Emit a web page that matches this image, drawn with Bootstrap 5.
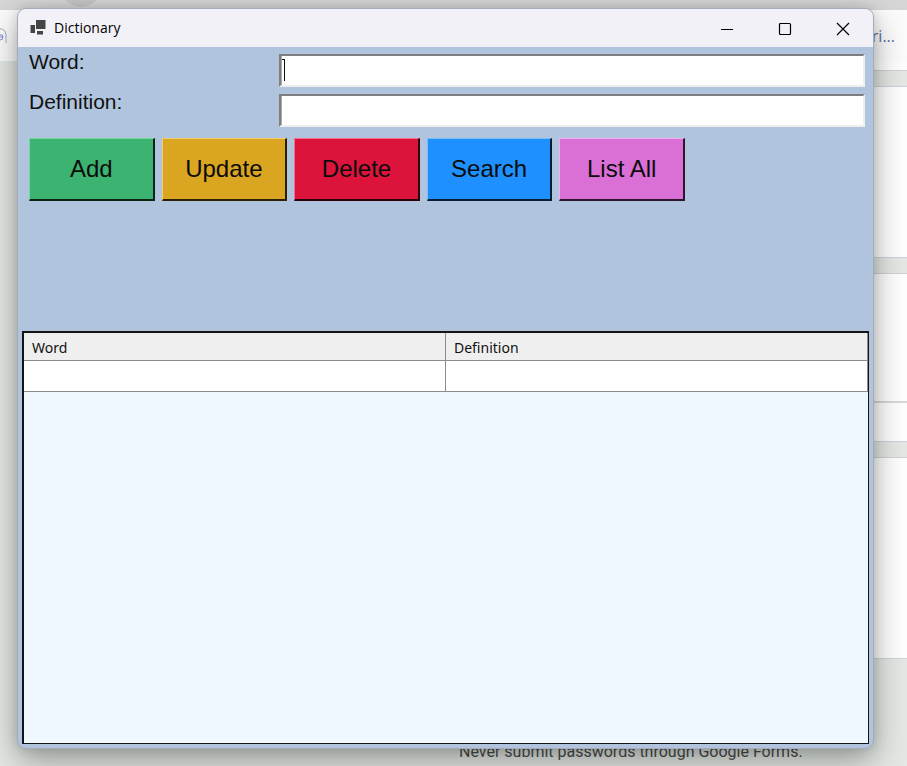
<!DOCTYPE html>
<html lang="en">
<head>
<meta charset="utf-8">
<meta name="viewport" content="width=device-width, initial-scale=1">
<title>Dictionary</title>
<link href="https://cdn.jsdelivr.net/npm/bootstrap@5.3.0/dist/css/bootstrap.min.css" rel="stylesheet">
<style>
  body { background: #e3e8e4; font-family: "Liberation Sans", Arial, sans-serif; color: #111; }

  /* Browser page behind the window */
  .tab-strip { height: 10px; background: #d6d6d6; padding-left: 60px; }
  .tab-ring { width: 42px; height: 42px; margin-top: -35px; border: 7px solid #c6c6c6; border-radius: 50%; background: #ececec; }
  .bookmarks { height: 51px; background: #fbfbfb; font: 16px/20px "Open Sans", sans-serif; color: #5f6d9c; padding: 0 12px 0 0; }
  .bookmark-icon { width: 7px; height: 18px; }
  .sheets { margin-left: 140px; gap: 15px; }
  .sheet { background: #fefefe; border: solid #cfd3d8; border-width: 1px 0; }
  .sheet-head { height: 10px; border-top: 0; }
  .sheet-a { height: 172px; }
  .sheet-b { height: 169px; }
  .sheet-b-top { height: 129px; border-bottom: 2px solid #d8d8d8; }
  .sheet-c { height: 202px; }
  .form-note { font: 16px/20px Roboto, sans-serif; color: #4a4d4b; padding: 83px 0 0 459px; }

  /* Application window */
  .app-window { inset: 8px 33px 17px 17px; background: #b0c4de; border: 1px solid #a3abb8; border-radius: 9px; box-shadow: 0 12px 32px rgba(0, 0, 0, .34), 0 0 12px rgba(0, 0, 0, .12); }
  .title-bar { height: 38px; background: #f3f1f8; padding: 0 1px 0 12px; font: 14px/20px "Open Sans", sans-serif; color: #000; }
  .title-text { margin: 0 0 0 8px; font: inherit; }
  .caption-btn { width: 58px; height: 36px; background: none; border: 0; padding: 0; }
  .fields { display: grid; grid-template-columns: 250px 1fr; row-gap: 7px; padding: 7px 8px 0 11px; }
  .fields label { font-size: 21px; line-height: 16px; }
  .sunken { height: 33px; min-width: 0; width: 100%; font-size: 20px; padding: 0 2px; background: #fff; border: solid; border-width: 2px; border-color: #7e7e7e #eee #eee #7e7e7e; border-radius: 0; box-shadow: inset 1px 0 #aaa; outline: 0; }
  .caret { left: 3px; top: 4px; width: 6px; height: 24px; }
  .actions { gap: 7px; max-width: 674px; padding: 11px 7px 0 11px; }
  .act { height: 63px; flex: 1 1 0; font-size: 24px; line-height: 28px; padding: 0; color: #0b0b0b; border: solid; border-width: 1px 2px 2px 1px; }
  .act-add { background: #3cb371; border-color: #75d79e #0a2416 #0a2416 #75d79e; }
  .act-update { background: #daa520; border-color: #f0cd71 #2b2006 #2b2006 #f0cd71; }
  .act-delete { background: #dc143c; border-color: #f26d87 #2c040c #2c040c #f26d87; }
  .act-search { background: #1e90ff; border-color: #78bdff #061d33 #061d33 #78bdff; }
  .act-list { background: #da70d6; border-color: #efaeec #2b162a #2b162a #efaeec; }
  .grid-panel { margin: 130px 4px 4px; background: #f0f8ff; border: solid #151515; border-width: 2px 1px 1px 2px; }
  .word-grid { width: 100%; table-layout: fixed; border-collapse: separate; border-spacing: 0; font: 14px/20px "Noto Sans", sans-serif; }
  .word-grid th { height: 28px; background: #efefef; font-weight: 400; padding: 3px 8px 0; border-bottom: 1px solid #8c8c8c; }
  .word-grid td { height: 31px; background: #fff; padding: 0 8px; border-bottom: 1px solid #8c8c8c; }
  .word-grid th, .word-grid td { border-right: 1px solid #8c8c8c; }
</style>
<script src="https://cdn.jsdelivr.net/npm/bootstrap@5.3.0/dist/js/bootstrap.bundle.min.js"></script>
</head>
<body class="vh-100 overflow-hidden position-relative">

<div class="backdrop">
  <div class="tab-strip overflow-hidden"><div class="tab-ring"></div></div>
  <div class="bookmarks d-flex justify-content-between align-items-center">
    <svg class="bookmark-icon" viewBox="0 0 7 18" fill="none" stroke="#9fb0c4" aria-hidden="true"><path d="M0 2h2q4 1 4 6v8"/><path d="M0 8q3-1 3 2t-3 3M0 10h3" stroke="#7d8ee0"/></svg>
    <span>ri...</span>
  </div>
  <div class="sheets d-flex flex-column">
    <div class="sheet sheet-head"></div>
    <div class="sheet sheet-a"></div>
    <div class="sheet sheet-b"><div class="sheet-b-top"></div></div>
    <div class="sheet sheet-c"></div>
  </div>
  <p class="form-note text-nowrap mb-0">Never submit passwords through Google Forms.</p>
</div>

<main class="app-window position-absolute d-flex flex-column overflow-hidden">
  <header class="title-bar d-flex align-items-center flex-shrink-0">
    <svg width="16" height="16" viewBox="0 0 16 16" fill="#444" aria-hidden="true"><path d="M6 0h9.500v9H6zM.5 5H5v8H.5zM7 11h6v3.500H7z"/></svg>
    <h1 class="title-text">Dictionary</h1>
    <div class="ms-auto d-flex">
      <button class="caption-btn" type="button" aria-label="Minimize"><svg width="14" height="14" viewBox="0 0 14 14" stroke="#000"><path d="M1 7.500h12"/></svg></button>
      <button class="caption-btn" type="button" aria-label="Maximize"><svg width="14" height="14" viewBox="0 0 14 14" fill="none" stroke="#000" stroke-width="1.200"><rect x="1.500" y="1.500" width="11" height="11" rx="1"/></svg></button>
      <button class="caption-btn" type="button" aria-label="Close"><svg width="14" height="14" viewBox="0 0 14 14" stroke="#000" stroke-width="1.200"><path d="m1 1 12 12M13 1 1 13"/></svg></button>
    </div>
  </header>

  <form class="flex-shrink-0">
    <div class="fields">
      <label for="word">Word:</label>
      <div class="position-relative d-flex">
        <input class="sunken" id="word" type="text">
        <svg class="caret position-absolute" viewBox="0 0 6 24" fill="none" stroke="#111" aria-hidden="true"><path d="M2.500 1v22M0 1.500h2.500"/></svg>
      </div>
      <label for="definition">Definition:</label>
      <input class="sunken" id="definition" type="text">
    </div>
    <div class="actions d-flex">
      <button class="act act-add" type="button">Add</button>
      <button class="act act-update" type="button">Update</button>
      <button class="act act-delete" type="button">Delete</button>
      <button class="act act-search" type="button">Search</button>
      <button class="act act-list" type="button">List All</button>
    </div>
  </form>

  <section class="grid-panel flex-grow-1">
    <table class="word-grid">
      <thead><tr><th scope="col">Word</th><th scope="col">Definition</th></tr></thead>
      <tbody><tr><td></td><td></td></tr></tbody>
    </table>
  </section>
</main>
</body>
</html>
